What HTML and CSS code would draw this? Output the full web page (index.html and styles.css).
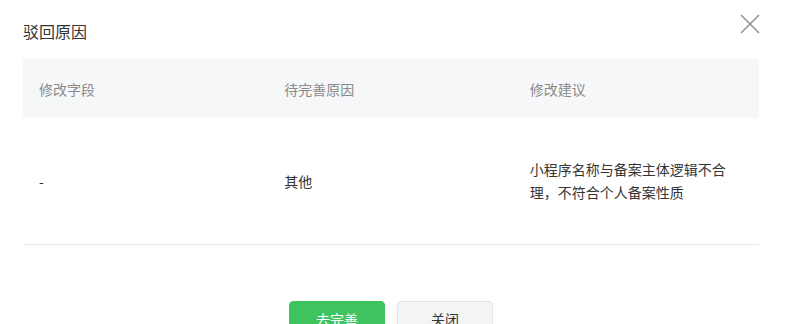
FILE: index.html
```html
<!DOCTYPE html>
<html>
<head>
  <link rel="stylesheet" href="styles.css">
</head>
<body>
  <div class="dialog">
    <div class="dialog-hd">
      <h3 class="title">驳回原因</h3>
      <button class="close-btn" aria-label="关闭">
        <svg width="20" height="20" viewBox="0 0 20 20">
          <path d="M1 1L19 19M19 1L1 19" stroke="#8a8a8a" stroke-width="1.4" fill="none"/>
        </svg>
      </button>
    </div>

    <table class="reason-table">
      <thead>
        <tr>
          <th>修改字段</th>
          <th>待完善原因</th>
          <th>修改建议</th>
        </tr>
      </thead>
      <tbody>
        <tr>
          <td>-</td>
          <td>其他</td>
          <td class="advice">小程序名称与备案主体逻辑不合理，不符合个人备案性质</td>
        </tr>
      </tbody>
    </table>

    <div class="dialog-ft">
      <button class="btn btn-primary">去完善</button>
      <button class="btn btn-default">关闭</button>
    </div>
  </div>
</body>
</html>
```

FILE: styles.css
```css
body {
  margin: 0;
  background: #fff;
  font-family: "Noto Sans CJK SC", "Microsoft YaHei", sans-serif;
  color: #353535;
}
.dialog {
  padding: 19px 30px 0 23px;
}
.dialog-hd {
  display: flex;
  justify-content: space-between;
  align-items: flex-start;
}
.title {
  margin: 0;
  font-size: 16px;
  font-weight: 400;
  line-height: 24px;
  color: #353535;
}
.close-btn {
  margin: -5px -1px 0 0;
  padding: 0;
  border: none;
  background: none;
  width: 20px;
  height: 20px;
  cursor: pointer;
}
.reason-table {
  width: 736px;
  margin-top: 16px;
  border-collapse: collapse;
  table-layout: fixed;
  font-size: 14px;
}
.reason-table th {
  height: 59px;
  padding: 0 16px;
  background: #f6f7f9;
  color: #8a8a8a;
  font-weight: 400;
  text-align: left;
}
.reason-table td {
  padding: 40px 16px;
  line-height: 23px;
  border-bottom: 1px solid #e7e7e7;
  vertical-align: middle;
}
.reason-table td.advice {
  padding-right: 20px;
}
.dialog-ft {
  display: flex;
  justify-content: center;
  gap: 12px;
  margin-top: 56px;
}
.btn {
  width: 96px;
  height: 36px;
  border-radius: 4px;
  font-family: inherit;
  font-size: 14px;
  cursor: pointer;
}
.btn-primary {
  background: #3fc35f;
  border: 1px solid #3fc35f;
  color: #fff;
}
.btn-default {
  background: #f3f4f6;
  border: 1px solid #e2e3e6;
  color: #353535;
}
```
